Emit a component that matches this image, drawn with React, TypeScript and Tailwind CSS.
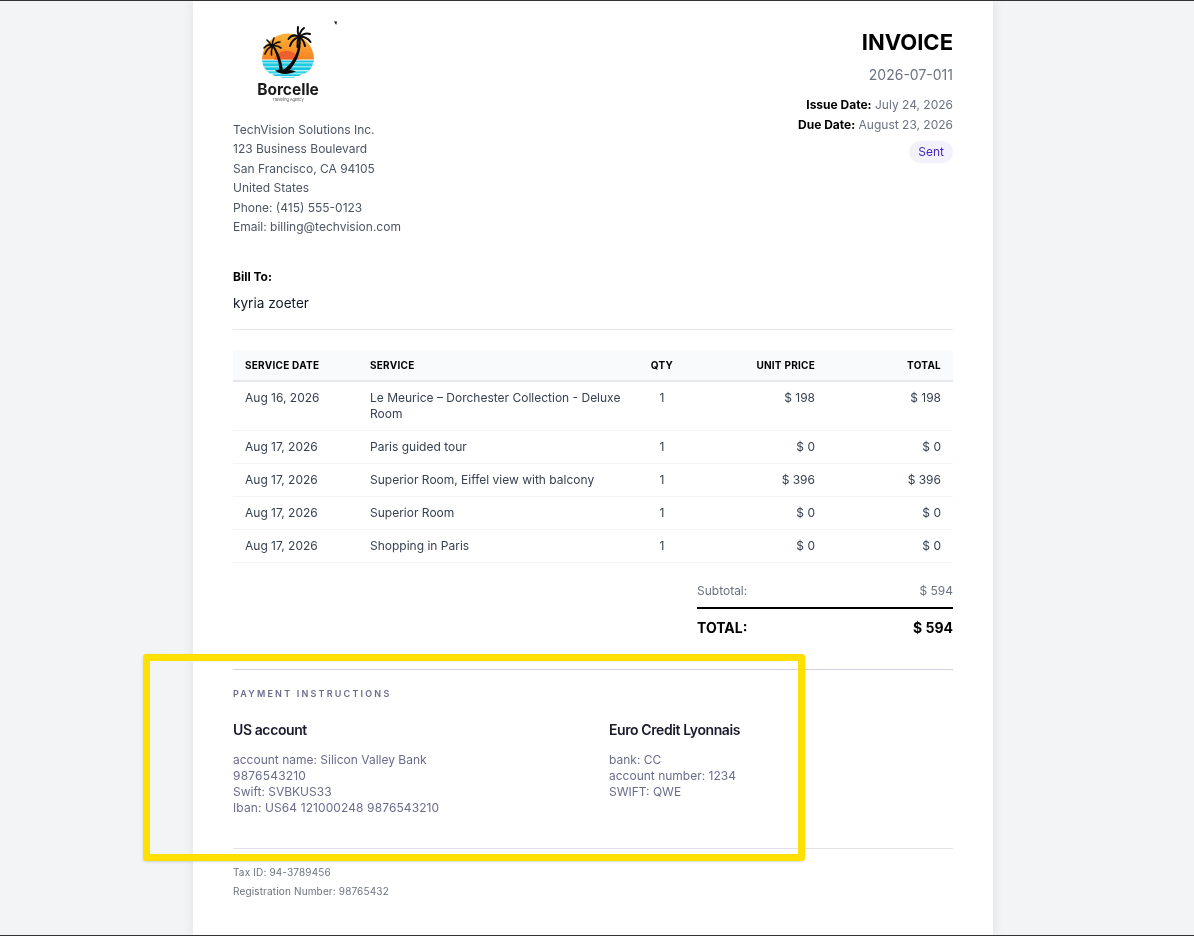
import React from 'react'

const rows = [
  { date: 'Aug 16, 2026', service: 'Le Meurice – Dorchester Collection - Deluxe Room', qty: 1, price: '$ 198', total: '$ 198' },
  { date: 'Aug 17, 2026', service: 'Paris guided tour', qty: 1, price: '$ 0', total: '$ 0' },
  { date: 'Aug 17, 2026', service: 'Superior Room, Eiffel view with balcony', qty: 1, price: '$ 396', total: '$ 396' },
  { date: 'Aug 17, 2026', service: 'Superior Room', qty: 1, price: '$ 0', total: '$ 0' },
  { date: 'Aug 17, 2026', service: 'Shopping in Paris', qty: 1, price: '$ 0', total: '$ 0' },
]

function Logo() {
  return (
    <svg width="110" height="90" viewBox="0 0 110 90" className="block blur-[0.35px]">
      <defs>
        <linearGradient id="sky" x1="0" y1="0" x2="0" y2="1">
          <stop offset="0" stopColor="#fbb437" />
          <stop offset="1" stopColor="#f58424" />
        </linearGradient>
      </defs>
      <path d="M29 41.500a26 26 0 0 1 52 0z" fill="url(#sky)" />
      <path d="M41 41.500a13 12 0 0 1 25 0z" fill="#ef5f2b" />
      {/* water stripes */}
      <path d="M29 42.500h52l-.5 2H29.500z" fill="#14c4dd" />
      <path d="M29.500 45.300h50.500l-1 3.200H30.500z" fill="#1fcbe2" />
      <path d="M31 49.300h47.500l-2 3H33.500z" fill="#14c4dd" />
      <path d="M34 53.200h41l-3 2.300H37z" fill="#2fd2e6" />
      <path d="M39 56.300h30l-3 1.700H42z" fill="#14c4dd" />
      <path d="M47 58.800h16l-2 1.200H49z" fill="#5ddff0" />
      {/* trunks and sand */}
      <path d="M65.500 20c1 13-5 24-15 32l5 1.500C64 44 69 32 67.500 20z" fill="#0a0a0a" />
      <path d="M40 29c3 7 6 14 6.500 24l3.500 .5c-1-10-4-18-8.500-25z" fill="#0a0a0a" />
      <path d="M42 52.500c6-1.500 14-1.500 21 1-4 1.500-7 2.500-11 2.500-4 0-7-1.500-10-3.500z" fill="#0a0a0a" />
      {/* crowns */}
      <g fill="none" stroke="#0a0a0a" strokeLinecap="round">
        <g strokeWidth="2">
          <path d="M66 19Q60 15 55.500 21" />
          <path d="M66 19Q59 21 57 28" />
          <path d="M66 19Q64 23 64.500 29" />
          <path d="M66 19Q71 22 72 28" />
          <path d="M66 19Q73 18 77.500 24" />
          <path d="M66 19Q72 14 77 16" />
          <path d="M66 19Q67 13 71 10" />
          <path d="M66 19Q64 14 65 9" />
        </g>
        <g strokeWidth="1.600">
          <path d="M39.500 28Q35 25 31 30" />
          <path d="M39.500 28Q34 30 32 36" />
          <path d="M39.500 28Q38 33 38.500 37" />
          <path d="M39.500 28Q43 31 44 36" />
          <path d="M39.500 28Q44 27 48 30" />
          <path d="M39.500 28Q43 24 47 24" />
          <path d="M39.500 28Q39 24 41 20" />
          <path d="M39.500 28Q36 24 34 22" />
        </g>
      </g>
      <text x="55" y="76.500" textAnchor="middle" fontFamily="Inter, sans-serif" fontWeight="700" fontSize="15.500" fill="#1a1a1a">Borcelle</text>
      <text x="55" y="83" textAnchor="middle" fontFamily="Inter, sans-serif" fontSize="3.800" fill="#555555">Traveling Agency</text>
      <path d="M101 3.500h3l-.8 3.500z" fill="#111" />
    </svg>
  )
}

export default function App() {
  return (
    <div className="relative flex h-[936px] justify-center overflow-hidden border-y border-[#333333] bg-[#f3f4f6] pr-2 font-['Inter',sans-serif]">
      <div className="w-[800px] bg-white px-10 pt-[17px] shadow-[0_0_12px_rgba(0,0,0,0.08)] will-change-transform">
        <div className="flex justify-between">
          <div>
            <Logo />
            <div className="mt-[11.5px] text-[12px] leading-[19.5px] text-[#4b5563]">
              <div>TechVision Solutions Inc.</div>
              <div>123 Business Boulevard</div>
              <div>San Francisco, CA 94105</div>
              <div>United States</div>
              <div>Phone: (415) 555-0123</div>
              <div>Email: billing@techvision.com</div>
            </div>
          </div>
          <div className="flex flex-col items-end pt-[6px]">
            <h1 className="text-[22px] font-bold leading-9 text-black">INVOICE</h1>
            <div className="mt-[5px] text-sm leading-5 text-[#6b7280]">2026-07-011</div>
            <div className="mt-[10px] text-[12px] leading-5 text-[#6b7280]">
              <span className="font-bold text-black">Issue Date:</span> July 24, 2026
            </div>
            <div className="text-[12px] leading-5 text-[#6b7280]">
              <span className="font-bold text-black">Due Date:</span> August 23, 2026
            </div>
            <span className="mt-[6px] rounded-full bg-[#f3f1fc] px-[9px] py-[3px] text-[12px] leading-4 text-[#4326b8]">Sent</span>
          </div>
        </div>

        <div className="mt-[31.5px] border-b border-[#e5e7eb] pb-[15px]">
          <div className="text-[12px] font-bold leading-[18px] text-black">Bill To:</div>
          <div className="mt-[7px] text-[13.6px] leading-[21px] text-[#111827]">kyria zoeter</div>
        </div>

        <table className="mt-[20px] w-full table-fixed border-collapse text-[12px] leading-4 text-[#374151]">
          <colgroup>
            <col className="w-[125px]" />
            <col className="w-[279px]" />
            <col className="w-[50px]" />
            <col className="w-[140px]" />
            <col className="w-[126px]" />
          </colgroup>
          <thead>
            <tr className="h-[31px] border-b-2 border-[#e5e7eb] bg-[#f9fafb] text-[10px] tracking-[0.25px] text-black">
              <th className="px-3 text-left font-bold uppercase">Service Date</th>
              <th className="px-3 text-left font-bold uppercase">Service</th>
              <th className="text-center font-bold uppercase">Qty</th>
              <th className="px-3 text-right font-bold uppercase">Unit Price</th>
              <th className="px-3 text-right font-bold uppercase">Total</th>
            </tr>
          </thead>
          <tbody>
            {rows.map((r, i) => (
              <tr key={i} className="border-b border-[#f3f4f6] align-top">
                <td className="px-3 py-2">{r.date}</td>
                <td className="px-3 py-2">{r.service}</td>
                <td className="py-2 text-center">{r.qty}</td>
                <td className="px-3 py-2 text-right">{r.price}</td>
                <td className="px-3 py-2 text-right">{r.total}</td>
              </tr>
            ))}
          </tbody>
        </table>

        <div className="mt-[19px] flex justify-end">
          <div className="w-[256px]">
            <div className="flex justify-between border-b-2 border-black pb-[7px] text-[12px] leading-[18px] text-[#6b7280]">
              <span>Subtotal:</span>
              <span>$ 594</span>
            </div>
            <div className="mt-[8px] flex justify-between text-sm font-bold leading-[21px] text-black">
              <span>TOTAL:</span>
              <span>$ 594</span>
            </div>
          </div>
        </div>

        <div className="mt-[31px] border-y border-t-[#d5cfe0] border-b-[#e4e1ec] pb-[32px] pt-[17px]">
          <div className="text-[9px] font-semibold uppercase leading-[14px] tracking-[2.2px] text-[#6b6b8d]">Payment Instructions</div>
          <div className="mt-[19px] grid grid-cols-2 gap-8">
            <div>
              <div className="text-sm font-semibold leading-5 tracking-[-0.4px] text-[#1a1a2e]">US account</div>
              <div className="mt-[12px] text-[12px] leading-4 text-[#6b6b8d]">
                <div>account name: Silicon Valley Bank</div>
                <div className="tracking-[0.2px]">9876543210</div>
                <div>Swift: SVBKUS33</div>
                <div className="tracking-[0.1px]">Iban: US64 121000248 9876543210</div>
              </div>
            </div>
            <div>
              <div className="text-sm font-semibold leading-5 tracking-[-0.4px] text-[#1a1a2e]">Euro Credit Lyonnais</div>
              <div className="mt-[12px] text-[12px] leading-4 text-[#6b6b8d]">
                <div>bank: CC</div>
                <div>account number: 1234</div>
                <div>SWIFT: QWE</div>
              </div>
            </div>
          </div>
        </div>

        <div className="mt-[14px] text-[10px] leading-[19px] tracking-[0.15px] text-[#6b7280]">
          <div>Tax ID: 94-3789456</div>
          <div>Registration Number: 98765432</div>
        </div>
      </div>

      {/* highlight drawn over the screenshot */}
      <div className="absolute left-[143px] top-[653px] h-[207px] w-[662px] rounded-[3px] border-[7px] border-[#ffe000] shadow-[0_1px_3px_rgba(0,0,0,0.15)]" />
    </div>
  )
}
